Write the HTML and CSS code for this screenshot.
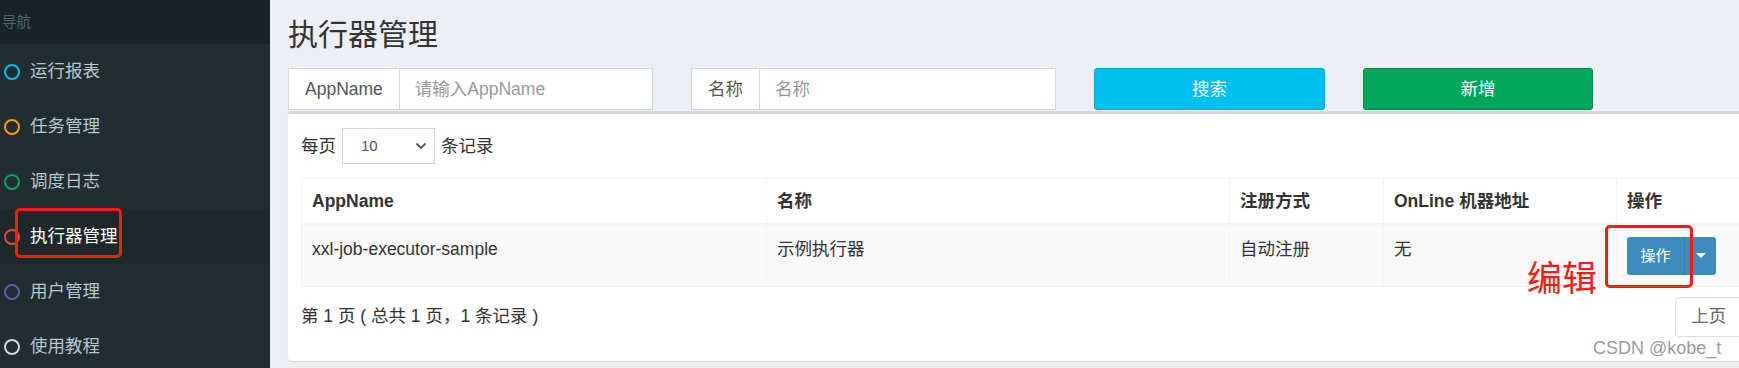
FILE: index.html
```
<!DOCTYPE html>
<html lang="zh-CN">
<head>
  <meta charset="UTF-8">
  <title>执行器管理</title>
  <link rel="stylesheet" href="styles.css">
</head>
<body>
  <aside class="sidebar">
    <div class="nav-header">导航</div>
    <ul class="menu">
      <li><span class="ring aqua"></span>运行报表</li>
      <li><span class="ring yellow"></span>任务管理</li>
      <li><span class="ring green"></span>调度日志</li>
      <li class="active"><span class="ring red"></span>执行器管理</li>
      <li><span class="ring purple"></span>用户管理</li>
      <li><span class="ring gray"></span>使用教程</li>
    </ul>
  </aside>

  <main class="content">
    <h1 class="page-title">执行器管理</h1>

    <div class="filters">
      <div class="input-group">
        <span class="addon">AppName</span>
        <input type="text" placeholder="请输入AppName">
      </div>
      <div class="input-group">
        <span class="addon">名称</span>
        <input type="text" placeholder="名称">
      </div>
      <button class="btn btn-search">搜索</button>
      <button class="btn btn-add">新增</button>
    </div>

    <div class="box">
      <div class="length">
        每页
        <span class="select">10
          <svg width="12" height="8" viewBox="0 0 12 8"><path d="M1.5 1.5 L6 6 L10.5 1.5" fill="none" stroke="#555" stroke-width="1.8"/></svg>
        </span>
        条记录
      </div>

      <table class="grid">
        <colgroup>
          <col style="width:465px">
          <col style="width:463px">
          <col style="width:154px">
          <col style="width:233px">
          <col>
        </colgroup>
        <thead>
          <tr>
            <th>AppName</th>
            <th>名称</th>
            <th>注册方式</th>
            <th>OnLine 机器地址</th>
            <th>操作</th>
          </tr>
        </thead>
        <tbody>
          <tr>
            <td>xxl-job-executor-sample</td>
            <td>示例执行器</td>
            <td>自动注册</td>
            <td>无</td>
            <td>
              <div class="split-btn">
                <span class="main">操作</span>
                <span class="caret-part"><span class="caret"></span></span>
              </div>
            </td>
          </tr>
        </tbody>
      </table>

      <div class="pager">
        <span>第 1 页 ( 总共 1 页，1 条记录 )</span>
        <ul class="pagination">
          <li>上页</li>
          <li>1</li>
          <li>下页</li>
        </ul>
      </div>
    </div>
  </main>

  <!-- annotations drawn over the screenshot -->
  <div class="mark mark-menu"></div>
  <div class="mark mark-op"></div>
  <div class="mark-text">编辑</div>
  <div class="watermark">CSDN @kobe_t</div>
</body>
</html>
```

FILE: styles.css
```
html, body {
  overflow: hidden;
}
body {
  margin: 0;
  width: 1900px;
  min-height: 368px;
  display: flex;
  position: relative;
  background-color: #ecf0f5;
  font-family: "Liberation Sans", "Noto Sans CJK SC", sans-serif;
  font-size: 17.5px;
  line-height: 1.42857;
  color: #333;
}

/* sidebar */
.sidebar {
  width: 270px;
  flex-shrink: 0;
  background-color: #222d32;
}
.nav-header {
  height: 44px;
  line-height: 44px;
  padding-left: 2px;
  background-color: #1a2226;
  color: #4b646f;
  font-size: 14.5px;
}
.menu {
  list-style: none;
  margin: 0;
  padding: 0;
}
.menu li {
  height: 55px;
  display: flex;
  align-items: center;
  gap: 10px;
  padding-left: 4px;
  color: #b8c7ce;
}
.menu li.active {
  background-color: #1e282c;
  color: #fff;
}
.ring {
  width: 16px;
  height: 16px;
  box-sizing: border-box;
  border: 2.5px solid;
  border-radius: 50%;
}
.ring.aqua { border-color: #00c0ef; }
.ring.yellow { border-color: #f39c12; }
.ring.green { border-color: #00a65a; }
.ring.red { border-color: #dd4b39; }
.ring.purple { border-color: #605ca8; }
.ring.gray { border-color: #d2d6de; }

/* content */
.content {
  width: 1574px;
  padding-left: 18px;
}
.page-title {
  margin: 0;
  padding-top: 18px;
  font-size: 30px;
  font-weight: 400;
  line-height: 33px;
  color: #333;
}
.filters {
  display: flex;
  gap: 38px;
  margin-top: 17px;
  height: 42px;
}
.input-group {
  width: 365px;
  display: flex;
  box-sizing: border-box;
  border: 1px solid #d2d6de;
  background-color: #fff;
}
.addon {
  padding: 0 16px;
  display: flex;
  align-items: center;
  border-right: 1px solid #d2d6de;
  color: #555;
}
.input-group input {
  flex: 1;
  min-width: 0;
  border: none;
  outline: none;
  padding: 0 15px;
  font: inherit;
  color: #555;
}
.input-group input::placeholder {
  color: #999;
}
.btn {
  width: 231px;
  border: 1px solid;
  border-radius: 3px;
  font: inherit;
  color: #fff;
}
.btn-search {
  background-color: #00c0ef;
  border-color: #00acd6;
}
.btn-add {
  width: 230px;
  background-color: #00a65a;
  border-color: #008d4c;
}

.box {
  margin-top: 1px;
  height: 250px;
  box-sizing: border-box;
  padding: 14px 13px 0;
  background-color: #fff;
  border-top: 3px solid #d2d6de;
  border-radius: 4px;
  box-shadow: 0 1px 1px rgba(0, 0, 0, 0.1);
}
.length {
  display: flex;
  align-items: center;
  gap: 6px;
  height: 36px;
}
.select {
  width: 93px;
  height: 36px;
  box-sizing: border-box;
  border: 1px solid #d2d6de;
  display: flex;
  align-items: center;
  justify-content: space-between;
  padding: 0 7px 0 18px;
  font-size: 15px;
  color: #555;
}

.grid {
  width: 100%;
  margin-top: 14px;
  border-collapse: collapse;
  table-layout: fixed;
  border: 1px solid #f4f4f4;
}
.grid th,
.grid td {
  text-align: left;
  vertical-align: top;
  border: 1px solid #f4f4f4;
}
.grid th {
  padding: 10px 10px 9px;
  font-weight: 700;
  border-bottom-width: 2px;
}
.grid td {
  padding: 12px 10px 11px;
  background-color: #f9f9f9;
}
.split-btn {
  display: inline-flex;
  height: 38px;
  border-radius: 3px;
  overflow: hidden;
  background-color: #3c8dbc;
  color: #fff;
  font-size: 15px;
}
.split-btn .main {
  width: 57px;
  display: flex;
  align-items: center;
  justify-content: center;
  border-right: 1px solid #367fa9;
}
.caret-part {
  width: 31px;
  display: flex;
  align-items: center;
  justify-content: center;
}
.caret {
  border-top: 5px solid #fff;
  border-left: 5px solid transparent;
  border-right: 5px solid transparent;
}

.pager {
  display: flex;
  justify-content: space-between;
  align-items: center;
  margin-top: 10px;
  height: 40px;
}
.pagination {
  display: flex;
  list-style: none;
  margin: 0;
  padding: 0;
}
.pagination li {
  height: 40px;
  box-sizing: border-box;
  padding: 0 15px;
  display: flex;
  align-items: center;
  border: 1px solid #ddd;
  margin-left: -1px;
  color: #666;
}
.pagination li:first-child {
  border-radius: 5px 0 0 5px;
}

/* annotations */
.mark {
  position: absolute;
  box-sizing: border-box;
  border: 3px solid #ff1a0d;
  border-radius: 5px;
}
.mark-menu {
  left: 15px;
  top: 208px;
  width: 107px;
  height: 50px;
}
.mark-op {
  left: 1605px;
  top: 225px;
  width: 88px;
  height: 63px;
}
.mark-text {
  position: absolute;
  left: 1527px;
  top: 256px;
  font-family: "Noto Sans CJK SC", sans-serif;
  font-size: 35px;
  line-height: 40px;
  color: #ff1a0d;
}
.watermark {
  position: absolute;
  left: 1593px;
  top: 337px;
  font-size: 18px;
  line-height: 22px;
  color: rgba(120, 120, 120, 0.75);
}
```
